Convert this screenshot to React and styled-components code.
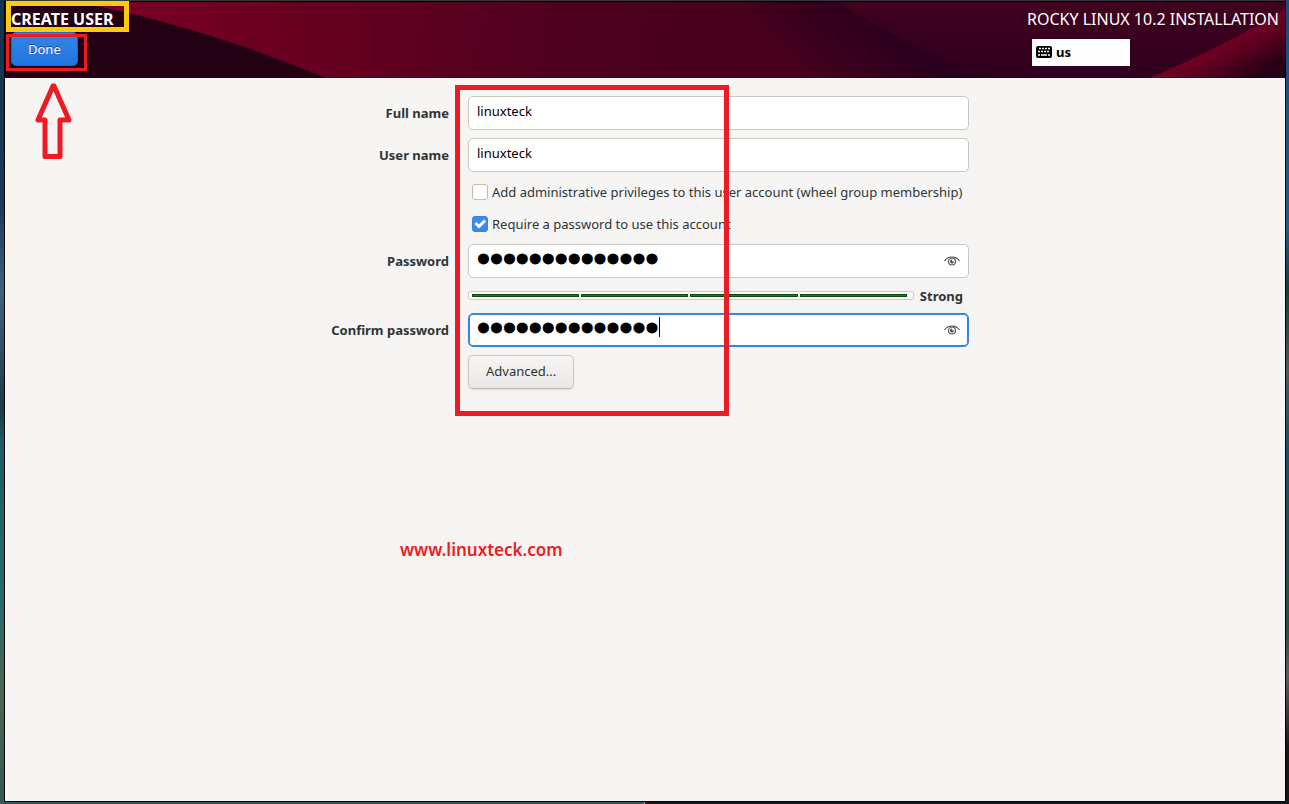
import React, { useState } from "react";
import styled, { createGlobalStyle } from "styled-components";

const GlobalStyle = createGlobalStyle`
  * {
    box-sizing: border-box;
  }
  body {
    margin: 0;
    font-family: "Noto Sans", sans-serif;
    font-size: 13px;
    line-height: 18px;
    color: #2e3436;
  }
  button, input {
    font: inherit;
    color: inherit;
  }
`;

const HeaderArt = () => (
  <Art viewBox="0 0 1280 76" preserveAspectRatio="none" aria-hidden="true">
    <defs>
      <linearGradient id="base" x1="0" y1="0" x2="1" y2="0">
        <stop offset="0.08" stopColor="#7a0024" />
        <stop offset="0.25" stopColor="#660020" />
        <stop offset="0.45" stopColor="#540020" />
        <stop offset="0.65" stopColor="#46001e" />
        <stop offset="1" stopColor="#3c001c" />
      </linearGradient>
      <linearGradient id="shade" x1="660" y1="110" x2="400" y2="0" gradientUnits="userSpaceOnUse">
        <stop offset="0" stopColor="#48001c" stopOpacity="0.8" />
        <stop offset="1" stopColor="#48001c" stopOpacity="0" />
      </linearGradient>
      <linearGradient id="fold" x1="780" y1="60" x2="845" y2="-10" gradientUnits="userSpaceOnUse">
        <stop offset="0" stopColor="#2a001e" stopOpacity="0" />
        <stop offset="1" stopColor="#2a001e" />
      </linearGradient>
      <linearGradient id="right" x1="0" y1="0" x2="0" y2="1">
        <stop offset="0" stopColor="#420020" />
        <stop offset="1" stopColor="#2e001e" />
      </linearGradient>
      <linearGradient id="ribbon" x1="1205" y1="40" x2="1228" y2="84" gradientUnits="userSpaceOnUse">
        <stop offset="0" stopColor="#780024" />
        <stop offset="0.4" stopColor="#600020" />
        <stop offset="1" stopColor="#280016" />
      </linearGradient>
    </defs>
    <rect width="1280" height="76" fill="url(#base)" />
    <rect width="1280" height="76" fill="url(#shade)" />
    <path d="M560 0H832Q900 42 985 76H560Z" fill="url(#fold)" />
    <path d="M832 0H1280V76H985Q900 42 832 0Z" fill="url(#right)" />
    <path d="M1145 76Q1215 46 1280 7V76Z" fill="url(#ribbon)" />
    <path d="M0 0H72Q190 22 321 76H0Z" fill="#240013" />
  </Art>
);

const KeyboardIcon = () => (
  <svg width="16" height="12" viewBox="0 0 16 12" aria-hidden="true">
    <rect width="16" height="12" rx="2" fill="#000" />
    <path
      d="M3 2.5h2M6 2.5h2M9 2.5h2M12 2.5h2M2 5.5h2M5 5.5h2M8 5.5h2M11 5.5h2M2 9h2M5 9h6M12 9h2"
      stroke="#fff"
      strokeWidth="1.600"
    />
  </svg>
);

const EyeIcon = () => (
  <svg width="16" height="11" viewBox="0 0 16 11" fill="none" stroke="#4a4f51" aria-hidden="true">
    <path d="M0.5 5C2.5 2 5 1 8 1s5.500 1 7.500 4" strokeWidth="1.200" />
    <circle cx="8" cy="5.500" r="3.500" strokeWidth="1.100" />
    <path d="M8 3.700v2h1.800A1.800 1.800 0 1 1 8 3.700z" fill="#4a4f51" strokeWidth="0.500" />
  </svg>
);

const PasswordBox = ({ id, value, onChange, autoFocus }) => {
  const [shown, setShown] = useState(false);
  return (
    <PasswordWrap>
      {shown ? (
        <Entry id={id} type="text" value={value} onChange={onChange} />
      ) : (
        <MaskedEntry id={id} type="password" value={value} onChange={onChange} autoFocus={autoFocus} />
      )}
      {!shown && <Caret style={{ left: 9 + value.length * 13 }} />}
      <RevealButton
        type="button"
        aria-label={shown ? "Hide password" : "Show password"}
        onClick={() => setShown(!shown)}
      >
        <EyeIcon />
      </RevealButton>
    </PasswordWrap>
  );
};

export default function App() {
  const [user, setUser] = useState({
    fullName: "linuxteck",
    userName: "linuxteck",
    admin: false,
    needsPassword: true,
    password: "linuxteck12345",
    confirm: "linuxteck12345",
  });
  const setText = (key) => (e) => setUser({ ...user, [key]: e.target.value });
  const setFlag = (key) => (e) => setUser({ ...user, [key]: e.target.checked });

  return (
    <Desktop>
      <GlobalStyle />
      <Window>
        <Header>
          <HeaderArt />
          <HeaderSide>
            <Title>CREATE USER</Title>
            <DoneButton type="button">Done</DoneButton>
          </HeaderSide>
          <HeaderSide>
            <Product>ROCKY LINUX 10.2 INSTALLATION</Product>
            <Layout>
              <KeyboardIcon />
              us
            </Layout>
          </HeaderSide>
          <TitleMark />
          <DoneMark />
        </Header>

        <Main>
          <Arrow width="38" height="77" viewBox="0 0 38 77" aria-hidden="true">
            <path
              d="M18 3L3 37H10V73.500H25V37H34L19 3Z"
              fill="none"
              stroke="#ed1c24"
              strokeWidth="5"
              strokeLinejoin="round"
            />
          </Arrow>

          <Form onSubmit={(e) => e.preventDefault()}>
            <Label htmlFor="full-name">Full name</Label>
            <Entry id="full-name" type="text" value={user.fullName} onChange={setText("fullName")} />

            <Label htmlFor="user-name">User name</Label>
            <Entry id="user-name" type="text" value={user.userName} onChange={setText("userName")} />

            <CheckRow>
              <Check type="checkbox" checked={user.admin} onChange={setFlag("admin")} />
              Add administrative privileges to this user account (wheel group membership)
            </CheckRow>
            <CheckRow>
              <Check type="checkbox" checked={user.needsPassword} onChange={setFlag("needsPassword")} />
              Require a password to use this account
            </CheckRow>

            <Label htmlFor="password">Password</Label>
            <PasswordBox id="password" value={user.password} onChange={setText("password")} />

            <StrengthRow>
              <StrengthBar role="meter" aria-label="Password strength" aria-valuemin={0} aria-valuemax={4} aria-valuenow={4}>
                <Block />
                <Block />
                <Block />
                <Block />
              </StrengthBar>
              <strong>Strong</strong>
            </StrengthRow>

            <Label htmlFor="confirm">Confirm password</Label>
            <PasswordBox id="confirm" value={user.confirm} onChange={setText("confirm")} autoFocus />

            <AdvancedButton type="button">Advanced...</AdvancedButton>
            <FieldsMark />
          </Form>

          <Site>www.linuxteck.com</Site>
        </Main>
      </Window>
    </Desktop>
  );
}

const Desktop = styled.div`
  min-height: 100vh;
  display: flex;
  flex-direction: column;
  padding: 0 3px 2px 4px;
  background:
    linear-gradient(#14324f 0, #17395a 25%, #3a6482 36%, #1a3a4a 51%, #1f5a66 55%, #2a6a6a 75%, #4a6650 87%, #2e5a58 100%)
      left / 50% 100% no-repeat,
    linear-gradient(#1d4a78 0, #265a8a 28%, #1c3a3a 36%, #50585a 46%, #1f5060 56%, #2f4a44 78%, #5a5e5c 84%, #14181a 93%, #14181a 100%)
      right / 50% 100% no-repeat;
`;

const Window = styled.div`
  flex: 1;
  display: flex;
  flex-direction: column;
  border: 1px solid #000;
  border-top-color: #33393b;
  background: #f6f5f4;
`;

const Header = styled.header`
  position: relative;
  display: flex;
  justify-content: space-between;
  height: 77px;
  padding: 6px 6px 0;
  border-top: 1px solid #000;
`;

const Art = styled.svg`
  position: absolute;
  inset: 0;
  width: 100%;
  height: 100%;
`;

const HeaderSide = styled.div`
  position: relative;
  display: flex;
  flex-direction: column;
  align-items: flex-start;
`;

const Title = styled.h1`
  margin: 0;
  font-size: 16px;
  line-height: 22px;
  color: #fff;
`;

const Product = styled.div`
  font-size: 16px;
  line-height: 22px;
  color: #fff;
`;

const DoneButton = styled.button`
  height: 34px;
  margin-top: 2px;
  padding: 0 16px;
  border: 1px solid #1b6acb;
  border-radius: 5px;
  background: linear-gradient(#3584e4, #1f76e1);
  color: #fff;
  text-shadow: 0 -1px rgba(0, 0, 0, 0.5);
`;

const Layout = styled.div`
  display: flex;
  align-items: center;
  gap: 4px;
  width: 98px;
  height: 27px;
  margin: 9px 0 0 5px;
  padding: 0 4px 2px;
  background: #fdfdfd;
  color: #000;
  font-weight: bold;
`;

const Main = styled.main`
  position: relative;
  flex: 1;
  padding: 18px 0 0 8px;
`;

const Form = styled.form`
  position: relative;
  display: grid;
  grid-template-columns: 120px minmax(0, 501px);
  column-gap: 19px;
  row-gap: 8px;
  align-items: center;
  max-width: 640px;
  margin: 0 auto;
`;

const Label = styled.label`
  font-weight: bold;
  text-align: right;
  white-space: nowrap;
`;

const Entry = styled.input`
  display: block;
  width: 100%;
  height: 34px;
  padding: 0 8px 4px;
  border: 1px solid #cdc7c2;
  border-radius: 5px;
  outline: none;
  background: #fff;
  color: #000;

  &:focus {
    border-color: #3584e4;
    box-shadow: inset 0 0 0 1px #3584e4;
  }
`;

/* the bullets of this face are large and sit close together */
const MaskedEntry = styled(Entry)`
  font-family: "Liberation Sans", sans-serif;
  font-size: 37px;
  line-height: 30px;
  caret-color: transparent;
  -webkit-text-stroke: 1px #000;
`;

const PasswordWrap = styled.div`
  position: relative;
`;

const Caret = styled.span`
  display: none;
  position: absolute;
  top: 4px;
  width: 1px;
  height: 20px;
  background: #000;

  ${MaskedEntry}:focus + & {
    display: block;
  }
`;

const RevealButton = styled.button`
  position: absolute;
  top: 0;
  right: 1px;
  display: flex;
  align-items: center;
  height: 100%;
  padding: 0 8px;
  border: 0;
  background: none;
`;

const CheckRow = styled.label`
  grid-column: 2;
  display: flex;
  align-items: center;
  gap: 4px;
  height: 24px;
  padding-left: 4px;
  white-space: nowrap;
`;

const Check = styled.input`
  appearance: none;
  width: 16px;
  height: 16px;
  margin: 0;
  border: 1px solid #bfb8b1;
  border-radius: 3px;
  background: #fff;

  &:checked {
    border-color: #3584e4;
    background: #3e8ae6
      url("data:image/svg+xml,%3Csvg xmlns='http://www.w3.org/2000/svg' viewBox='0 0 14 14'%3E%3Cpath d='M2.500 6l3.500 3.500 6-6' fill='none' stroke='white' stroke-width='3'/%3E%3C/svg%3E");
  }
`;

const StrengthRow = styled.div`
  grid-column: 2;
  display: flex;
  align-items: center;
  gap: 6px;
  height: 19px;
  padding-right: 6px;
`;

const StrengthBar = styled.div`
  flex: 1;
  display: flex;
  gap: 2px;
  height: 9px;
  padding: 2px 6px 2px 3px;
  border: 1px solid #cdc7c2;
  border-radius: 3px;
  background: #fff;
`;

const Block = styled.div`
  flex: 1;
  height: 3px;
  border: 1px solid #0b4f0b;
  background: #168016;
`;

const AdvancedButton = styled.button`
  grid-column: 2;
  justify-self: start;
  height: 34px;
  padding: 0 17px 2px;
  border: 1px solid #cdc7c2;
  border-bottom-color: #bfb8b1;
  border-radius: 5px;
  background: linear-gradient(#f6f5f4, #e9e8e6);
  box-shadow: 0 1px 2px rgba(0, 0, 0, 0.1);
`;

const Site = styled.p`
  margin: 148px 0 0 387px;
  font-size: 17px;
  line-height: 26px;
  font-weight: 600;
  color: #ed1c24;
`;

/* highlight frames drawn over the window */
const Mark = styled.div`
  position: absolute;
  pointer-events: none;
`;

const TitleMark = styled(Mark)`
  top: -1px;
  left: 1px;
  width: 123px;
  height: 31px;
  border: 5px solid #ffc90e;
`;

const DoneMark = styled(Mark)`
  top: 32px;
  left: 1px;
  width: 81px;
  height: 37px;
  border: 3px solid #ed1c24;
`;

const FieldsMark = styled(Mark)`
  top: -11px;
  left: 126px;
  width: 274px;
  height: 331px;
  border: 5px solid #ed1c24;
`;

const Arrow = styled.svg`
  position: absolute;
  top: 5px;
  left: 30px;
`;
